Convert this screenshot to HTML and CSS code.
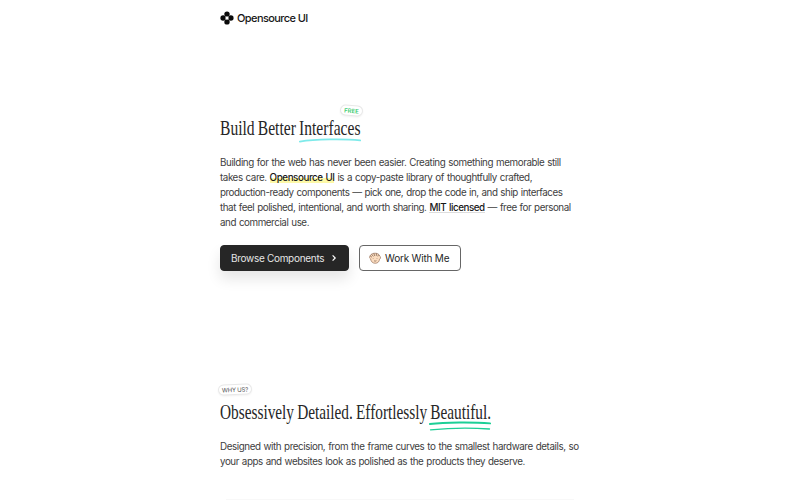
FILE: index.html
```
<!DOCTYPE html>
<html lang="en">

<head>
  <meta charset="UTF-8">
  <meta name="viewport" content="width=device-width, initial-scale=1.0">
  <title>Opensource UI</title>
  <link rel="stylesheet" href="styles.css">
</head>

<body>
  <div class="page">
    <header class="header">
      <svg class="logo" viewBox="0 0 14 14">
        <circle cx="7" cy="3.1" r="2.7" />
        <circle cx="3.1" cy="7" r="2.7" />
        <circle cx="10.9" cy="7" r="2.7" />
        <circle cx="7" cy="10.9" r="2.7" />
        <circle class="logo-hole" cx="7" cy="7" r="1.5" />
      </svg>
      <span class="brand">Opensource UI</span>
    </header>

    <section class="hero">
      <h1 class="title"><span class="title-text">Build Better Interfaces</span>
        <span class="badge badge-free">FREE</span>
        <svg class="line line-cyan" viewBox="0 0 62 5">
          <path d="M0.8 3.6 C16 1.2 44 0.6 61.2 2.4" />
        </svg>
      </h1>
      <p class="text">
        <span class="row r1">Building for the web has never been easier. Creating something memorable still</span>
        <span class="row r2">takes care. <b class="mark">Opensource UI</b> is a copy-paste library of thoughtfully crafted,</span>
        <span class="row r3">production-ready components — pick one, drop the code in, and ship interfaces</span>
        <span class="row r4">that feel polished, intentional, and worth sharing. <b class="mit">MIT licensed</b> — free for personal</span>
        <span class="row r5">and commercial use.</span>
      </p>
      <div class="actions">
        <a class="btn btn-dark">Browse Components
          <svg class="chevron" viewBox="0 0 6 8">
            <path d="M1.6 1.4 L4.2 4 L1.6 6.6" />
          </svg>
        </a>
        <a class="btn btn-light">
          <svg class="face" viewBox="0 0 12 12">
            <path class="skin" d="M0.7 4.4 C0.2 5.4 0.8 6.4 1.6 7 C2 9.8 3.8 11.3 6.2 11.3 C8.8 11.3 10.3 9.6 10.5 7.3 C11.8 6.8 12 4.6 10.8 4.2 C10.4 2.4 8.6 1.2 6 1.2 C3.6 1.2 1.4 2.4 0.7 4.4 Z" />
            <path class="hair" d="M1.2 4 L3 5.2 M2.6 2.3 L4.4 4.4 M4.8 1.4 L5.8 4 M7.4 1.4 L7.4 3.8 M9.6 2.6 L8.8 4.4" />
            <path class="hair" d="M4.2 6.2 V6.7 M8 6.2 V6.7 M5 8.7 C5.6 9.2 6.8 9.2 7.4 8.7" />
          </svg>
          <span>Work With Me</span>
        </a>
      </div>
    </section>

    <section class="why">
      <h2 class="title"><span class="title-text wide">Obsessively Detailed. Effortlessly Beautiful.</span>
        <span class="badge badge-why">WHY US?</span>
        <svg class="line line-green" viewBox="0 0 62 10">
          <path d="M0.8 3 C16 1.2 44 1 61.2 2.4" />
          <path class="thin" d="M1.5 8.8 C18 7.2 44 6.8 60.5 8" />
        </svg>
      </h2>
      <p class="text">
        <span class="row r6">Designed with precision, from the frame curves to the smallest hardware details, so</span>
        <span class="row r7">your apps and websites look as polished as the products they deserve.</span>
      </p>
      <div class="frame"></div>
    </section>
  </div>
</body>

</html>
```
FILE: styles.css
```
* {
  margin: 0;
  padding: 0;
  box-sizing: border-box;
}

body {
  height: 500px;
  overflow: hidden;
  background: #fff;
  color: #404040;
  font-family: Inter, "Liberation Sans", sans-serif;
  font-size: 10px;
}

.page {
  width: 360px;
  margin: 0 auto;
}

.header {
  display: flex;
  align-items: center;
  gap: 3px;
  height: 36px;
}

.logo {
  width: 14px;
  height: 14px;
  fill: #0a0a0a;
}

.logo .logo-hole {
  fill: #fff;
}

.brand {
  color: #171717;
  font-size: 11px;
  font-weight: 500;
  letter-spacing: -0.6px;
}

.hero {
  padding-top: 79px;
}

.title {
  position: relative;
  height: 26px;
  line-height: 26px;
  color: #262626;
  font-family: "Liberation Serif", serif;
  font-size: 22px;
  font-weight: 400;
  white-space: nowrap;
}

/* condensed serif */
.title-text {
  display: inline-block;
  word-spacing: -1px;
  transform: scaleX(0.708);
  transform-origin: 0 50%;
}

.title-text.wide {
  transform: scaleX(0.696);
}

.badge {
  position: absolute;
  display: flex;
  align-items: center;
  justify-content: center;
  height: 11px;
  background: #fff;
  border: 1px solid #e8e8e8;
  border-radius: 6px;
  box-shadow: 0 1px 2px rgba(0, 0, 0, 0.06);
  font-family: Inter, sans-serif;
  font-size: 6px;
  line-height: 1;
}

.badge-free {
  left: 120px;
  top: -10px;
  width: 23px;
  color: #22c55e;
  font-weight: 500;
  transform: rotate(4deg);
}

.badge-why {
  left: -2px;
  top: -15px;
  width: 34px;
  color: #555;
  letter-spacing: -0.2px;
  transform: rotate(-2deg);
}

.line {
  position: absolute;
  fill: none;
  stroke-linecap: round;
  stroke-width: 1.8;
}

.line-cyan {
  left: 79px;
  top: 23px;
  width: 62px;
  height: 5px;
  stroke: #7eeaea;
}

.line-green {
  left: 209px;
  top: 22px;
  width: 62px;
  height: 10px;
  stroke: #1ccf96;
}

.line-green .thin {
  stroke-width: 1.3;
}

.text {
  margin-top: 14px;
  font-size: 9.8px;
  line-height: 15px;
  word-spacing: 0.6px;
}

.row {
  display: table;
  white-space: nowrap;
}

.r1 {
  letter-spacing: -0.41px;
}

.r2,
.r5 {
  letter-spacing: -0.43px;
}

.r3 {
  letter-spacing: -0.46px;
}

.r4 {
  letter-spacing: -0.44px;
}

.r6 {
  letter-spacing: -0.415px;
}

.r7 {
  letter-spacing: -0.435px;
}

.mark,
.mit {
  color: #171717;
  font-weight: 500;
}

.mark {
  background: linear-gradient(transparent 55%, #fdf9a8 55%);
}

.mit {
  background: linear-gradient(#ddd, #ddd) 0 100% / 100% 1px no-repeat;
}

.actions {
  display: flex;
  gap: 10px;
  margin-top: 15px;
}

.btn {
  display: flex;
  align-items: center;
  height: 26px;
  padding: 0 10px;
  border: 1px solid #262626;
  border-radius: 4px;
  white-space: nowrap;
}

.btn-dark {
  width: 129px;
  justify-content: space-between;
  background: #262626;
  color: #e5e5e5;
  letter-spacing: -0.3px;
  box-shadow: 0 8px 14px rgba(0, 0, 0, 0.1);
}

.btn-light {
  width: 102px;
  gap: 4px;
  padding: 0 9px;
  border-color: #666;
  color: #262626;
  letter-spacing: -0.2px;
}

.chevron {
  width: 6px;
  height: 8px;
  margin-right: 1px;
  fill: none;
  stroke: #fff;
  stroke-width: 1.2;
}

.face {
  width: 12px;
  height: 12px;
  flex: none;
}

.skin {
  fill: #fbdcbf;
  stroke: #8a6249;
  stroke-width: 0.6;
}

.hair {
  fill: none;
  stroke: #5c4132;
  stroke-width: 0.6;
}

.why {
  padding-top: 128px;
}

.frame {
  height: 10px;
  margin: 30px 6px 0;
  border-top: 1px solid #f8f8f8;
}
```
